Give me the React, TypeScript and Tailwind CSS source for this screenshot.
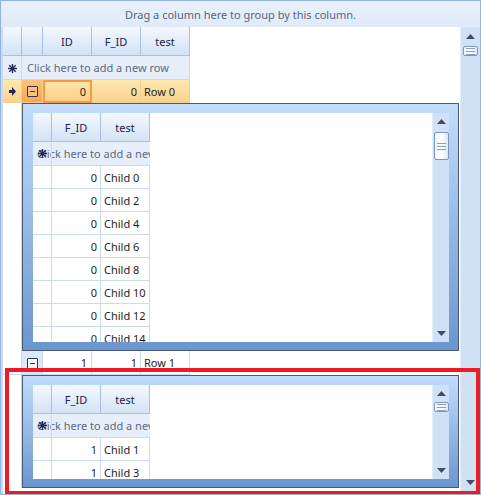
import * as React from 'react'

const ArrowUp = () => (
  <svg width="9" height="5" viewBox="0 0 9 5">
    <path d="M0 5 L4.5 0 L9 5 Z" fill="#3f4d66" />
  </svg>
)

const ArrowDown = () => (
  <svg width="9" height="5" viewBox="0 0 9 5">
    <path d="M0 0 L9 0 L4.5 5 Z" fill="#3f4d66" />
  </svg>
)

const Star = () => (
  <svg width="9" height="9" viewBox="0 0 9 9">
    <g stroke="#1c2a55" strokeWidth="1.3">
      <line x1="4.5" y1="0" x2="4.5" y2="9" />
      <line x1="0" y1="4.5" x2="9" y2="4.5" />
      <line x1="1.3" y1="1.3" x2="7.7" y2="7.7" />
      <line x1="7.7" y1="1.3" x2="1.3" y2="7.7" />
    </g>
  </svg>
)

const RowArrow = () => (
  <svg width="7" height="9" viewBox="0 0 7 9">
    <path d="M0 3 L3 3 L3 0 L7 4.5 L3 9 L3 6 L0 6 Z" fill="#1c2a55" />
  </svg>
)

function Thumb({ h }: { h: number }) {
  return (
    <div
      className="w-[15px] rounded-[2px] border border-[#7f97ba] bg-gradient-to-r from-[#eef4fc] via-[#ffffff] to-[#dbe7f6] flex flex-col items-center justify-center gap-[2px]"
      style={{ height: h }}
    >
      <div className="w-[9px] h-px bg-[#8aa0c2]" />
      <div className="w-[9px] h-px bg-[#8aa0c2]" />
      <div className="w-[9px] h-px bg-[#8aa0c2]" />
    </div>
  )
}

function ScrollBar({ thumbTop, thumbH, w, top, bottom }: { thumbTop: number; thumbH: number; w: string; top: number; bottom: number }) {
  return (
    <div className={`${w} h-full bg-[#d1e1f5] border-l border-[#e4eefb] flex flex-col items-center`}>
      <div className="flex items-center justify-center shrink-0" style={{ height: top }}>
        <ArrowUp />
      </div>
      <div style={{ marginTop: thumbTop }}>
        <Thumb h={thumbH} />
      </div>
      <div className="flex-1" />
      <div className="flex items-center justify-center shrink-0" style={{ height: bottom }}>
        <ArrowDown />
      </div>
    </div>
  )
}

const hdr =
  'h-full flex items-center justify-center pt-[2px] border-r border-b border-[#a9c1de] bg-gradient-to-b from-[#f4f8fd] to-[#d3e2f5] text-[#22224a]'
const cell = 'h-full flex items-center pt-[2px] border-r border-b border-[#c9dbf1]'

function MinusBox({ orange }: { orange?: boolean }) {
  return (
    <div
      className={`w-[11px] h-[11px] border border-[#2a3656] rounded-[1px] flex items-center justify-center ${
        orange ? 'bg-[#fcc279]' : 'bg-[#f3f7fd]'
      }`}
    >
      <div className="w-[5px] h-px bg-[#2a3656]" />
    </div>
  )
}

function Detail({ rows, innerH, thumbTop, thumbH }: { rows: [string, string][]; innerH: number; thumbTop: number; thumbH: number }) {
  return (
    <div className="w-[437px] border border-[#4a5a72] bg-gradient-to-b from-[#c2ddfb] to-[#6a96cf] pt-[9px] pl-[10px] pr-[9px] pb-[8px]">
      <div className="flex" style={{ height: innerH }}>
        <div className="flex-1 bg-white overflow-hidden">
          <div className="flex h-[29px]">
            <div className={`${hdr} w-[19px]`} />
            <div className={`${hdr} w-[49px]`}>F_ID</div>
            <div className={`${hdr} w-[49px]`}>test</div>
          </div>
          <div className="relative w-[117px] h-[24px] pt-[2px] bg-[#e6eef9] border-b border-[#c9dbf1] overflow-hidden flex items-center">
            <span className="pl-[4px] whitespace-nowrap text-[#5d6b80]">Click here to add a new row</span>
            <div className="absolute left-0 top-0 w-[19px] h-full border-r border-[#c9dbf1] flex items-center justify-center">
              <Star />
            </div>
          </div>
          {rows.map(([a, b]) => (
            <div key={b} className="flex h-[23px]">
              <div className={`${cell} w-[19px]`} />
              <div className={`${cell} w-[49px] justify-end pr-[3px]`}>{a}</div>
              <div className={`${cell} w-[49px] pl-[3px] whitespace-nowrap`}>{b}</div>
            </div>
          ))}
        </div>
        <ScrollBar w="w-[17px]" top={17} bottom={17} thumbTop={thumbTop} thumbH={thumbH} />
      </div>
    </div>
  )
}

export default function App() {
  const evens: [string, string][] = [0, 2, 4, 6, 8, 10, 12, 14].map((n) => ['0', `Child ${n}`])
  const odds: [string, string][] = [1, 3, 5].map((n) => ['1', `Child ${n}`])

  return (
    <div className="relative w-[481px] h-[495px] bg-white border border-[#93b4df] font-['Noto_Sans',sans-serif] text-[11px] text-[#1e1e1e] overflow-hidden">
      <div className="h-[26px] pt-[2px] bg-gradient-to-b from-[#e9f0fb] to-[#e0eaf8] flex items-center justify-center text-[#56667e]">
        Drag a column here to group by this column.
      </div>
      <div className="flex h-[467px]">
        <div className="flex-1 border-l-2 border-[#c9dcf4] overflow-hidden">
          <div className="flex h-[29px]">
            <div className={`${hdr} w-[19px]`} />
            <div className={`${hdr} w-[21px]`} />
            <div className={`${hdr} w-[49px]`}>ID</div>
            <div className={`${hdr} w-[49px]`}>F_ID</div>
            <div className={`${hdr} w-[49px]`}>test</div>
          </div>
          <div className="flex h-[24px]">
            <div className={`${cell} w-[19px] justify-center bg-[#e6eef9]`}>
              <Star />
            </div>
            <div className="w-[168px] h-full pt-[2px] bg-[#e6eef9] border-r border-b border-[#c9dbf1] flex items-center pl-[5px] text-[#5d6b80] whitespace-nowrap">
              Click here to add a new row
            </div>
          </div>
          <div className="flex h-[23px]">
            <div className="w-[19px] h-full flex items-center justify-center bg-gradient-to-b from-[#fde8b0] to-[#fbd28c] border-r border-b border-[#f2cd8e]">
              <RowArrow />
            </div>
            <div className="w-[21px] h-full flex items-center justify-center bg-gradient-to-b from-[#fdc27a] to-[#f9a74e] border-r border-b border-[#f2cd8e]">
              <MinusBox orange />
            </div>
            <div className="w-[49px] h-full flex items-center justify-end pt-[2px] pr-[4px] bg-gradient-to-b from-[#ffe2a8] to-[#fcd08a] border-2 border-[#f59b43]">
              0
            </div>
            <div className="w-[49px] h-full flex items-center justify-end pt-[2px] pr-[3px] bg-gradient-to-b from-[#fde8b0] to-[#fbd28c] border-r border-b border-[#f2cd8e]">
              0
            </div>
            <div className="w-[49px] h-full flex items-center pt-[2px] pl-[3px] bg-gradient-to-b from-[#fde8b0] to-[#fbd28c] border-r border-b border-[#f2cd8e]">
              Row 0
            </div>
          </div>
          <div className="flex">
            <div className="w-[19px] border-r border-[#c9dbf1]" />
            <Detail rows={evens} innerH={229} thumbTop={2} thumbH={28} />
          </div>
          <div className="flex h-[24px]">
            <div className={`${cell} w-[19px]`} />
            <div className={`${cell} w-[21px] justify-center bg-[#dce8f7]`}>
              <MinusBox />
            </div>
            <div className={`${cell} w-[49px] justify-end pr-[4px]`}>1</div>
            <div className={`${cell} w-[49px] justify-end pr-[3px]`}>1</div>
            <div className={`${cell} w-[49px] pl-[3px]`}>Row 1</div>
          </div>
          <div className="flex">
            <div className="w-[19px] border-r border-[#c9dbf1]" />
            <Detail rows={odds} innerH={94} thumbTop={0} thumbH={10} />
          </div>
        </div>
        <ScrollBar w="w-[20px]" top={19} bottom={24} thumbTop={0} thumbH={10} />
      </div>
      <div className="absolute left-[4px] top-[367px] w-[475px] h-[127px] border-[4px] border-[#ed1c24] pointer-events-none" />
    </div>
  )
}
